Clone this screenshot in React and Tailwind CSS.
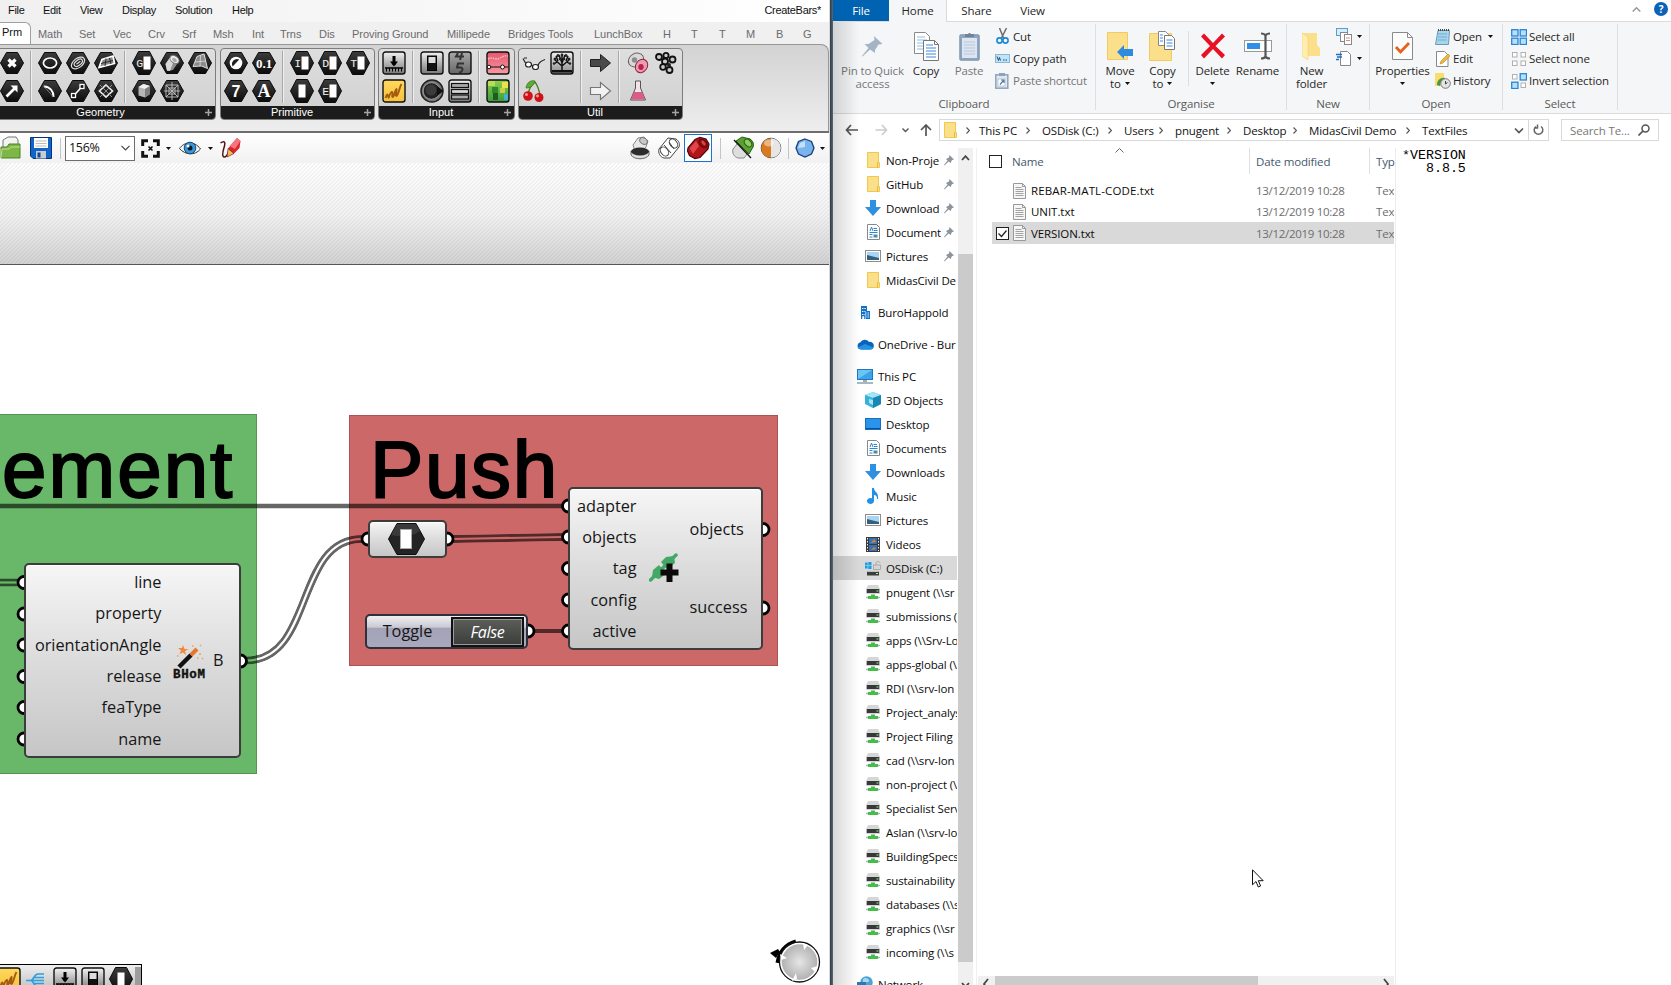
import React from 'react';

/* ---------- shared bits ---------- */

const Hex = ({ children, tall }) => (
  <svg width="24" height="24" viewBox="0 0 24 24" className="block">
    <defs>
      <linearGradient id="hexFill" x1="0" y1="0" x2="0" y2="1">
        <stop offset="0" stopColor="#3c3c3c" />
        <stop offset="1" stopColor="#0c0c0c" />
      </linearGradient>
    </defs>
    <path d={tall ? 'M6.5 .5h11L23.5 12l-6 11.5h-11L.5 12z' : 'M6.5 1.5h11L23.5 12l-6 10.5h-11L.5 12z'} fill="url(#hexFill)" stroke="#0a0a0a" />
    {children}
  </svg>
);

const HexText = ({ t, size = 15, x = 12, y = 17.5, serif, tall, block }) => (
  <Hex tall={tall}>
    <text x={block ? 7.8 : x} y={block ? 16 : y} textAnchor="middle" fontSize={block ? 11.5 : size} fontWeight={block ? 400 : 700} fill={block ? '#f0f0f0' : '#fff'} fontFamily={block ? 'Liberation Mono, monospace' : serif ? 'Liberation Serif, serif' : 'Liberation Sans, sans-serif'}>{t}</text>
    {block && <rect x="11.5" y="5.5" width="7" height="13" fill="#fff" />}
  </Hex>
);

const Framed = ({ children, from = '#f2f2f2', to = '#777' }) => {
  const id = `fr${from.slice(1)}${to.slice(1)}`;
  return (
    <svg width="24" height="24" viewBox="0 0 24 24" className="block">
      <defs>
        <linearGradient id={id} x1="0" y1="0" x2="0" y2="1">
          <stop offset="0" stopColor={from} />
          <stop offset="1" stopColor={to} />
        </linearGradient>
      </defs>
      <rect x="1" y="1" width="22" height="22" rx="2.5" fill={`url(#${id})`} stroke="#111" strokeWidth="1.4" />
      {children}
    </svg>
  );
};

const Caret = ({ className = '' }) => (
  <svg width="5" height="3" viewBox="0 0 5 3" className={`block shrink-0 ${className}`}><path d="M0 0h5L2.5 3z" fill="#111" /></svg>
);

/* ---------- component palette icons ---------- */

const I = {
  cross: <Hex><path d="M8.5 8.5l7 7M15.5 8.5l-7 7" stroke="#fff" strokeWidth="3.2" /></Hex>,
  vector: <Hex><path d="M6.5 17.5l8-8" stroke="#fff" strokeWidth="2.6" /><path d="M10.5 6.5h7v7z" fill="#fff" /></Hex>,
  circle: <Hex><ellipse cx="12" cy="12" rx="6.6" ry="5" fill="none" stroke="#fff" strokeWidth="1.7" /></Hex>,
  spiral: <Hex><g transform="rotate(-38 12 12)" fill="none" stroke="#ddd" strokeWidth="1.2"><ellipse cx="12" cy="12" rx="7.6" ry="4.6" /><ellipse cx="12.4" cy="12" rx="4.8" ry="2.6" /><path d="M10 12h5" /></g></Hex>,
  plane: <Hex><path d="M5 16.500l3-8 11-3.500 1.500 7.500z" fill="#888" stroke="#fff" strokeWidth="1.700" /><path d="M7 12.500l12-3M12 7.500l-1 7.500M15.500 7l1.500 6" stroke="#222" strokeWidth=".9" /></Hex>,
  arc: <Hex><path d="M6 7.500c6 .5 9.500 4.500 9.500 10.500" fill="none" stroke="#fff" strokeWidth="2" /><path d="M6 7.500l9.500 10.500M6 7.500v-1.500" stroke="#888" strokeWidth=".8" /></Hex>,
  line: <Hex><path d="M8 16.500l8-9" stroke="#fff" strokeWidth="1.600" /><rect x="5.500" y="14.500" width="4" height="4" fill="#111" stroke="#fff" strokeWidth="1.300" /><rect x="14" y="5.500" width="4" height="4" fill="#111" stroke="#fff" strokeWidth="1.300" /></Hex>,
  rect: <Hex><path d="M12 6l6.500 6L12 18l-6.500-6z" fill="#222" stroke="#e8e8e8" strokeWidth="1.700" /><path d="M6 6l12 12M18 6L6 18" stroke="#999" strokeWidth=".9" /></Hex>,
  brep: <Hex><path d="M5.500 13L11 5l8 5-6 9-6 1z" fill="#8e8e8e" /><path d="M5.500 13L11 5l2 7-3 8-3-.5z" fill="#d8d8d8" /><ellipse cx="14.500" cy="8.500" rx="5" ry="3.400" transform="rotate(35 14.500 8.500)" fill="#eee" stroke="#777" /><ellipse cx="14.500" cy="9" rx="2.700" ry="1.700" transform="rotate(35 14.500 9)" fill="#aaa" /></Hex>,
  surface: <Hex><path d="M9 5.500l7-2.500 3.500 14.500-6-2.500-8.500.5z" fill="#8c8c8c" stroke="#ddd" /><path d="M12.500 4.500l-.5 10.500M7 11l11-1" stroke="#ddd" strokeWidth=".8" /></Hex>,
  box: <Hex><path d="M6.500 8l5-3 6.500 2v8l-5 3.500-6.500-2z" fill="#b5b5b5" /><path d="M6.500 8l5-3 6.500 2-5 3z" fill="#f2f2f2" /><path d="M13 10l5-3v8l-5 3.500z" fill="#7e7e7e" /></Hex>,
  mesh: <Hex><g fill="none" stroke="#c4c4c4" strokeWidth=".9"><path d="M6 6h12v12H6zM9 9h6v6H9z" /><path d="M4 12h16M12 3v18M6 6l12 12M18 6L6 18" /></g></Hex>,
  bool: <Hex><circle cx="12" cy="12" r="6.300" fill="#fff" /><path d="M7.800 14.500a5 5 0 006.500-7z" transform="rotate(180 11.500 11.500)" fill="#222" /></Hex>,
  num: <HexText t="0.1" size={13} y={16.500} serif />,
  int: <HexText t="7" size={16} />,
  str: <HexText t="A" size={18} y={18} serif />,
  blockI: <HexText t="I" block tall />,
  blockD: <HexText t="D" block tall />,
  blockT: <HexText t="T" block tall />,
  blockE: <HexText t="E" block tall />,
  blockG: <HexText t="G" block tall />,
  blank: <Hex tall><rect x="8.500" y="5.500" width="7" height="13" fill="#fff" /></Hex>,
  slider: <Framed><path d="M12 5v9" stroke="#000" strokeWidth="3" /><path d="M8 10.500h8L12 15.500z" fill="#000" /><path d="M3 17h18" stroke="#000" strokeWidth="1.500" /><path d="M4.500 17v3.500M7.500 17v3.500M10.500 17v3.500M13.500 17v3.500M16.500 17v3.500M19.500 17v3.500" stroke="#000" /></Framed>,
  graph: <Framed from="#ffd95e" to="#f5c23c"><path d="M3.500 19c1-3 3-4 3-1s1-4 3-5 0 5 1 5c2 0 2-7 4-8 1 1-2 7 0 7 2-1 3-9 5-12M4 17l2-2" fill="none" stroke="#a65a10" strokeWidth="1.900" /></Framed>,
  toggle: <Framed><rect x="7.500" y="5" width="9" height="14.500" fill="#111" stroke="#000" /><rect x="8.500" y="6" width="7" height="6" fill="#ddd" /></Framed>,
  digits: <Framed from="#a8a8a8" to="#666"><path d="M10 2L8 5.500h8M14 2l-2 7M16 12.500h-6l-1 4h4c3 1 1 5-2 5" fill="none" stroke="#333" strokeWidth="2" /></Framed>,
  knob: <svg width="24" height="24" viewBox="0 0 24 24" className="block"><circle cx="12" cy="12" r="11" fill="#777" stroke="#222" strokeWidth="1.500" /><circle cx="11.500" cy="12" r="8.300" fill="#222" stroke="#aaa" strokeWidth=".8" /><path d="M17 7l6.500 5-6.500 5z" fill="#111" /><circle cx="11" cy="11" r="5.500" fill="#3b3b3b" /></svg>,
  list: <Framed><g fill="#aaa" stroke="#111" strokeWidth="1.200"><rect x="3.500" y="4.500" width="17" height="4" /><rect x="3.500" y="10.500" width="17" height="4" fill="#d4d4d4" /><rect x="3.500" y="16" width="17" height="4" /></g></Framed>,
  pinkPanel: <Framed from="#e4566f" to="#f79aa0"><path d="M1.800 16h20.400" stroke="#111" strokeWidth="1.200" /><path d="M2 8c5-3 7 2 12-1s6-2 8-2" stroke="#fbb" fill="none" strokeDasharray="1.500 1" strokeWidth="1.500" /><circle cx="3" cy="16" r="1.800" fill="#fff" stroke="#111" /><circle cx="16.500" cy="16" r="2" fill="#fff" stroke="#111" /></Framed>,
  heat: <Framed from="#8fcf4a" to="#3a9a3a"><rect x="2" y="2" width="7" height="5" fill="#b9dc5a" /><rect x="16" y="3" width="6" height="6" fill="#e6e250" /><rect x="6" y="8" width="6" height="6" fill="#2c8a2a" /><rect x="14" y="9" width="5" height="5" fill="#c0d24a" /><rect x="7" y="14" width="5" height="7" fill="#1d5a24" /><rect x="18" y="15" width="4" height="6" fill="#40b2d8" /></Framed>,
  glasses: <svg width="24" height="24" viewBox="0 0 24 24" className="block"><g fill="#fff" stroke="#222" strokeWidth="1.200"><ellipse cx="6.500" cy="13.500" rx="3" ry="2.500" /><ellipse cx="13.500" cy="16" rx="3" ry="2.500" /><path d="M3.500 12L1 7.500M9.300 14l1.400 1M16 14.500c1-3 4-5 7-6M2 7h3" fill="none" /></g></svg>,
  tree: <Framed from="#f0f0f0" to="#8a8a8a"><path d="M1.800 19h20.400v2.500H1.800z" fill="#111" /><path d="M12 20v-8M12 15L5 9M12 15l7-6M12 12L9 4M12 12l3-8M7 11l-3 2M17 11l3 2M8 10L6 5M16 10l2-5M12 11V4" stroke="#111" strokeWidth="1.500" fill="none" /><g fill="#222"><circle cx="5" cy="8" r="1.500" /><circle cx="8" cy="4.500" r="1.500" /><circle cx="12" cy="4" r="1.400" /><circle cx="16" cy="4.500" r="1.500" /><circle cx="19" cy="8" r="1.500" /><circle cx="4" cy="12.500" r="1.200" /><circle cx="20" cy="12.500" r="1.200" /><circle cx="10" cy="8" r="1.300" /><circle cx="14" cy="8" r="1.300" /></g></Framed>,
  cherry: <svg width="24" height="24" viewBox="0 0 24 24" className="block"><path d="M13 3C9 6 7 10 6 15M13 3c3 4 4 8 5 13" fill="none" stroke="#4c7c22" strokeWidth="1.300" /><path d="M13 2C9 1 5 3 4 9c5 0 8-3 9-7z" fill="#5cae34" stroke="#2d6b14" strokeWidth=".7" /><circle cx="6" cy="17" r="4.800" fill="#cf1018" /><circle cx="17" cy="18.500" r="4.500" fill="#cf1018" /><circle cx="4.500" cy="15.500" r="1.500" fill="#ff9a9a" /><circle cx="15.500" cy="17" r="1.400" fill="#ff9a9a" /></svg>,
  arrowDark: <svg width="24" height="24" viewBox="0 0 24 24" className="block"><path d="M2.500 8.500h10v-5L22.500 12l-10 8.500v-5h-10z" fill="#4a4a4a" stroke="#222" /></svg>,
  arrowLight: <svg width="24" height="24" viewBox="0 0 24 24" className="block"><path d="M2.500 8.500h10v-5L22.500 12l-10 8.500v-5h-10z" fill="#f2f2f2" stroke="#777" strokeWidth="1.200" /></svg>,
  cells: <svg width="24" height="24" viewBox="0 0 24 24" className="block"><ellipse cx="10" cy="9" rx="8" ry="6.500" transform="rotate(-30 10 9)" fill="#d9d9d9" stroke="#666" /><circle cx="8.500" cy="9" r="2.700" fill="#8c8c8c" /><ellipse cx="15.500" cy="15" rx="5.800" ry="7" transform="rotate(35 15.500 15)" fill="#ee9bb2" stroke="#8c2440" /><ellipse cx="15" cy="16" rx="2.700" ry="3" fill="#b8234a" /></svg>,
  frogs: <svg width="24" height="24" viewBox="0 0 24 24" className="block"><g fill="#c9c9c9" stroke="#111" strokeWidth="1.800"><circle cx="5" cy="6" r="3" /><circle cx="12" cy="4.500" r="2.600" /><circle cx="11" cy="10.500" r="3" /><circle cx="18.500" cy="8.500" r="3" /><circle cx="9" cy="16" r="2.800" /><circle cx="15.500" cy="19" r="3" /></g><circle cx="15" cy="14" r="2" fill="#222" /></svg>,
  flask: <svg width="24" height="24" viewBox="0 0 24 24" className="block"><path d="M9.500 2h5v7l5 12h-15l5-12z" fill="#f3e3e8" stroke="#555" /><path d="M8 13h8l3 7.500H5z" fill="#db5c85" /></svg>,
};

const PANELS = [
  { name: 'Geometry', width: 'w-[220px]', ml: '-ml-1', groups: [
    ['grid-cols-1', ['cross', 'vector']],
    ['grid-cols-3', ['circle', 'spiral', 'plane', 'arc', 'line', 'rect']],
    ['grid-cols-3', ['blockG', 'brep', 'surface', 'box', 'mesh']],
  ] },
  { name: 'Primitive', width: 'w-[155px]', ml: 'ml-1', groups: [
    ['grid-cols-2', ['bool', 'num', 'int', 'str']],
    ['grid-cols-3', ['blockI', 'blockD', 'blockT', 'blank', 'blockE']],
  ] },
  { name: 'Input', width: 'w-[137px]', ml: 'ml-[3px]', groups: [
    ['grid-cols-1', ['slider', 'graph']],
    ['grid-cols-2', ['toggle', 'digits', 'knob', 'list']],
    ['grid-cols-1', ['pinkPanel', 'heat']],
  ] },
  { name: 'Util', width: 'w-[165px]', ml: 'ml-[3px]', groups: [
    ['grid-cols-2', ['glasses', 'tree', 'cherry']],
    ['grid-cols-1', ['arrowDark', 'arrowLight']],
    ['grid-cols-2', ['cells', 'frogs', 'flask']],
  ] },
];

const Panel = ({ p }) => (
  <div className={`flex h-[72px] shrink-0 flex-col overflow-hidden rounded border border-[#7d7d7d] bg-gradient-to-b from-[#dedede] to-[#d0d0d0] ${p.width} ${p.ml}`}>
    <div className="flex h-[57px] pl-px">
      {p.groups.map(([cols, icons], i) => (
        <React.Fragment key={i}>
          {i > 0 && <div className="mx-[4px] mt-0.5 h-[52px] w-[2px] shrink-0 border-l border-[#a8a8a8] bg-[#efefef]" />}
          <div className={`grid shrink-0 auto-rows-[28px] ${cols}`}>
            {icons.map((n) => <div key={n} className="flex h-7 w-7 items-center justify-center">{I[n]}</div>)}
          </div>
        </React.Fragment>
      ))}
    </div>
    <div className="relative flex flex-1 items-center justify-center bg-[#1c1c1c] pr-[11px] text-[11px] leading-none text-white">
      {p.name}
      <svg width="7" height="7" viewBox="0 0 7 7" className="absolute right-[3px] top-[3px]"><path d="M3.500 0v7M0 3.500h7" stroke="#a4a4a4" strokeWidth="1.500" /></svg>
    </div>
  </div>
);

/* ---------- canvas toolbar ---------- */

const Sep = ({ className }) => <div className={`h-[21px] w-px bg-[#c4c4c4] ${className}`} />;

const CanvasToolbar = () => (
  <div className="flex h-[30px] shrink-0 items-center bg-gradient-to-b from-white to-[#f1f1f1]">
    <svg width="21" height="24" viewBox="0 0 21 24" className="shrink-0"><path d="M3 4l5-3h8l2 3v8H3z" fill="#f3f3f3" stroke="#777" /><path d="M1 11h6l2-3h11v14H1z" fill="#7fb648" stroke="#4b8424" /><path d="M1 22l1-9h7l2-2h9" fill="none" stroke="#bfe08c" /></svg>
    <svg width="22" height="22" viewBox="0 0 22 22" className="ml-[9px] shrink-0"><path d="M.5 .5h21v21H3l-2.500-2.500z" fill="#1264c8" stroke="#08356f" /><rect x="4" y="1" width="14" height="10" fill="#fff" /><path d="M5.500 4h11M5.500 6.500h11M5.500 9h11" stroke="#bbb" /><rect x="6" y="14" width="10" height="7.500" fill="#ccc" /><rect x="7.500" y="15.500" width="3" height="5" fill="#0a4ca0" /></svg>
    <Sep className="ml-2 shrink-0" />
    <div className="ml-1 flex h-[25px] w-[70px] shrink-0 items-center justify-between border border-[#6d6d6d] bg-white pl-[3px] pr-[4px] font-['Open_Sans',sans-serif] text-[12.500px] tracking-[-0.300px] text-[#111]">
      156%
      <svg width="9" height="6" viewBox="0 0 9 6"><path d="M.5 .8l4 4 4-4" fill="none" stroke="#444" strokeWidth="1.200" /></svg>
    </div>
    <svg width="19" height="19" viewBox="0 0 19 19" className="ml-[6px] shrink-0"><path d="M1.700 7V1.700H7M12 1.700h5.300V7M17.300 12v5.300H12M7 17.300H1.700V12" fill="none" stroke="#111" strokeWidth="3" /><path d="M7.500 7.500l4 4M11.500 7.500l-4 4" stroke="#111" strokeWidth="1.600" /></svg>
    <Caret className="ml-[6px]" />
    <svg width="22" height="16" viewBox="0 0 22 16" className="ml-[8px] shrink-0"><path d="M.5 8.500C5 2 15 0 21.500 9 16 16 6 15 .5 8.500z" fill="#f2f7fa" stroke="#333" /><circle cx="11" cy="8" r="5.800" fill="#3d95d6" stroke="#134c7c" /><circle cx="11" cy="8" r="2.500" fill="#0a1c30" /><circle cx="9" cy="6" r="1.500" fill="#fff" /></svg>
    <Caret className="ml-[7px]" />
    <svg width="22" height="22" viewBox="0 0 22 22" className="ml-[6px] shrink-0"><path d="M1.500 6c4-3 5-.5 4 3S2 19 5 20c3 .5 4-4 5-6" fill="none" stroke="#4a1414" strokeWidth="1.500" /><path d="M9 11.500L18 1l3.500 3-1 7-5.500 5.500-5 1.500z" fill="#d92530" /><path d="M18 1l3.500 3-5.500 8-5.500-3z" fill="#f4757c" /><path d="M9 11.500l6 5L8 20z" fill="#e9c04a" stroke="#603" strokeWidth=".6" /></svg>
    <div className="flex-1" />
    <div className="flex shrink-0 items-center pr-[4px]">
      <svg width="20" height="24" viewBox="0 0 20 24"><path d="M3 9l5-7 6-1 4 4-2 6-4 4H5z" fill="#e8e8e8" stroke="#888" /><ellipse cx="13.500" cy="5" rx="4" ry="3" transform="rotate(30 13.500 5)" fill="#c8c8c8" stroke="#777" /><path d="M1 15c4 3 14 3 18 0v4c-3 5-15 5-18 0z" fill="#ddd" stroke="#666" /><ellipse cx="10" cy="15.500" rx="9" ry="4" fill="#2c2c2c" /></svg>
      <svg width="22" height="22" viewBox="0 0 22 22" className="ml-[8px]"><g fill="#fff" stroke="#444"><path d="M1 12L10 1l8 1c3 2 4 5 3 8l-9 11H6c-4-1-6-5-5-9z" /><ellipse cx="15.500" cy="6.500" rx="3.500" ry="5" transform="rotate(-40 15.500 6.500)" /><ellipse cx="6.500" cy="14.500" rx="3.500" ry="5" transform="rotate(-40 6.500 14.500)" /><path d="M6 8l7 8M11 5l5 7" fill="none" /></g></svg>
      <div className="ml-[4px] flex h-7 w-7 shrink-0 items-center justify-center border border-[#1a74d0] bg-[#fbfdff]">
        <svg width="24" height="24" viewBox="0 0 24 24" className="block shrink-0"><path d="M2 12L9 3.500 14 1.500l6 1.500 3 5-1 5-8 8.500-5 1-5.500-3L1.500 15z" fill="#b3151b" stroke="#4d0507" strokeWidth="1.200" /><path d="M3.500 12L10 5l3 5-6 8z" fill="#e0454a" /><ellipse cx="17" cy="7.500" rx="3.300" ry="5" transform="rotate(-42 17 7.500)" fill="#8e0b10" stroke="#5c0508" /><ellipse cx="17.500" cy="7" rx="1.500" ry="2.800" transform="rotate(-42 17.500 7)" fill="#d0494d" /></svg>
      </div>
      <Sep className="ml-[8px]" />
      <svg width="24" height="24" viewBox="0 0 24 24" className="ml-[10px]"><path d="M2 13l9-11 8 1c3 2 4 5 3 8l-9 11H7c-4-1-6-5-5-9z" fill="#dedede" stroke="#888" /><path d="M5 5l6-4 8 2c3 2 4 5 3 8l-4 7z" fill="#5b9f35" stroke="#2c6210" /><ellipse cx="17" cy="7" rx="3" ry="4.500" transform="rotate(-40 17 7)" fill="#8ccb5f" stroke="#2c6210" /><path d="M3 4l17 18" stroke="#111" strokeWidth="1.300" /></svg>
      <svg width="22" height="22" viewBox="0 0 22 22" className="ml-[5px]"><circle cx="11" cy="11" r="9.800" fill="#e9e9e9" stroke="#444" /><path d="M11 1.200a9.800 9.800 0 000 19.600z" fill="#d97a1e" /><path d="M11 1.200a9.800 9.800 0 010 19.600z" fill="#e6e6e6" /><path d="M11 1.200a9.800 9.800 0 010 19.600z" fill="none" /><ellipse cx="9" cy="6" rx="5" ry="3.500" fill="#fff" opacity=".45" /></svg>
      <Sep className="ml-[6px]" />
      <svg width="20" height="20" viewBox="0 0 20 20" className="ml-[6px]"><path d="M10 1l6.500 2.500L19 10l-2.500 6L10 19l-6.500-3L1 10l2.500-6.500z" fill="#79b4ee" stroke="#163f78" strokeWidth="1.300" /><path d="M10 3l-5 2-2 5 7-1z" fill="#c4e0fb" /></svg>
      <Caret className="ml-[5px]" />
    </div>
  </div>
);

/* ---------- node canvas ---------- */

const Port = ({ x, y }) => <circle cx={x} cy={y} r="6" fill="#fff" stroke="#000" strokeWidth="2.800" />;

const DoubleWire = ({ id, d }) => (
  <g>
    <mask id={id} maskUnits="userSpaceOnUse" x="0" y="0" width="831" height="822">
      <path d={d} fill="none" stroke="#fff" strokeWidth="8" />
      <path d={d} fill="none" stroke="#000" strokeWidth="2.200" />
    </mask>
    <path d={d} fill="none" stroke="#000" strokeOpacity=".6" strokeWidth="8" mask={`url(#${id})`} />
  </g>
);

const nodeBox = 'absolute rounded-[5px] border-2 border-[#3c3c3c] bg-gradient-to-b from-[#f6f6f6] via-[#dcdcdc] to-[#c6c6c6] shadow-[inset_0_1px_0_#fff]';
const label = "font-['Open_Sans',sans-serif] text-[16.3px] text-[#161616]";
const heading = "absolute top-[261px] font-['Liberation_Sans',Arial,sans-serif] text-[80px] leading-[92px] text-black [-webkit-text-stroke:2px_#000]";

const Canvas = () => (
  <div className="relative flex-1 overflow-hidden bg-white">
    <div className="h-[102px] border-b border-[#555] bg-[linear-gradient(to_bottom,rgba(255,255,255,0.6),rgba(235,235,235,0.55)_50%,rgba(195,195,195,0.75)),repeating-linear-gradient(135deg,#fff_0_1.41px,#e2e2e2_1.41px_2.83px)]" />
    <div className="absolute -left-1 top-[251px] h-[360px] w-[261px] border border-[#559455] bg-[#69b869]" />
    <div className="absolute left-[349px] top-[252px] h-[251px] w-[429px] border border-[#a85454] bg-[#cc6868]" />
    <div className={`${heading} left-[2px] tracking-[2px]`}>ement</div>
    <div className={`${heading} left-[370px] tracking-[1.6px]`}>Push</div>

    <svg className="absolute left-0 top-0" width="831" height="822" viewBox="0 0 831 822">
      <path d="M0 343H562" stroke="#000" strokeOpacity=".6" strokeWidth="4.600" />
      <DoubleWire id="w1" d="M0 419.500H20" />
      <DoubleWire id="w2" d="M246 497.500C315 497.500 294 376 362 376" />
      <DoubleWire id="w3" d="M453 376L562 374" />
      <path d="M533 468H562" stroke="#000" strokeOpacity=".6" strokeWidth="4" />
      {[419.500, 451, 482, 513.500, 544.500, 576].map((y) => <Port key={y} x={24} y={y} />)}
      <Port x={240.500} y={498} />
      <Port x={368} y={376} /><Port x={447} y={376} />
      {[343, 374, 405.500, 437, 468].map((y) => <Port key={y} x={568.500} y={y} />)}
      <Port x={763} y={366.500} /><Port x={763} y={445} />
      <Port x={528} y={468} />
    </svg>

    <div className={`${nodeBox} left-[24px] top-[400px] flex h-[195px] w-[217px] items-center`}>
      <div className={`flex w-[135.500px] flex-col pt-px text-right ${label}`}>
        {['line', 'property', 'orientationAngle', 'release', 'feaType', 'name'].map((t) => <div key={t} className="h-[31.300px] leading-[31px]">{t}</div>)}
      </div>
      <svg width="34" height="36" viewBox="0 0 34 36" className="ml-[11px] mt-[2px] shrink-0">
        <path d="M6 23L18 11" stroke="#111" strokeWidth="4.500" /><path d="M18 11l6-6" stroke="#e8762a" strokeWidth="4" />
        <path d="M10 1l1.500 4 4 0-3.500 2 1 4-3-2.500L6.500 10 8 6.500 5 4h4z" fill="#f0883a" />
        <path d="M26 10h2M24 14h1.500M19 2h1.500M29 14l1 1M27 2l1-1M4 12h1.500" stroke="#f0a060" strokeWidth="1.600" />
        <text x="0" y="34" fontFamily="Liberation Mono, monospace" fontSize="12.500" fontWeight="700" textLength="32" lengthAdjust="spacing" fill="#111" stroke="#111" strokeWidth=".4">BHoM</text>
      </svg>
      <div className={`ml-[6.500px] ${label}`}>B</div>
    </div>

    <div className={`${nodeBox} left-[568px] top-[324px] flex h-[163px] w-[195px] items-center`}>
      <div className={`flex w-[66.500px] flex-col pt-px text-right ${label}`}>
        {['adapter', 'objects', 'tag', 'config', 'active'].map((t) => <div key={t} className="h-[31.300px] leading-[31px]">{t}</div>)}
      </div>
      <svg width="30" height="30" viewBox="0 0 30 30" className="-mt-[2px] ml-[12px]">
        <path d="M1.500 27L27 2" stroke="#43a866" strokeWidth="3.500" strokeLinecap="round" /><path d="M12 9l5-5 8-1 1 7-8 6z" fill="#43a866" /><path d="M3 24l1-7 6-5 7 9-7 5z" fill="#43a866" />
        <path d="M20.500 10.500V29M11.500 19.500H29.500" stroke="#0a0a0a" strokeWidth="6" />
      </svg>
      <div className={`ml-[11px] flex flex-col gap-[47px] ${label}`}>
        {['objects', 'success'].map((t) => <div key={t} className="h-[31px] leading-[31px]">{t}</div>)}
      </div>
    </div>

    <div className={`${nodeBox} left-[368px] top-[357px] flex h-[38px] w-[79px] items-center justify-center pr-[2px]`}>
      <svg width="37" height="32" viewBox="0 0 37 32"><path d="M9 .5h19L36.500 16 28 31.500H9L.5 16z" fill="#242424" stroke="#0d0d0d" /><path d="M9 1h19l4 7C24 14 12 14 3 12z" fill="#4a4a4a" opacity=".6" /><rect x="12.500" y="6.500" width="11" height="19" fill="#fff" stroke="#aaa" /></svg>
    </div>

    <div className="absolute left-[365px] top-[451px] flex h-[35px] w-[163px] items-center rounded-[5px] border-2 border-[#30303a] bg-[linear-gradient(to_bottom,#f0f0f3,#c9c9d3_36%,#a3a3b8_40%,#a9a9bd)] pr-[2px]">
      <div className={`flex-1 pr-[3px] text-center ${label}`}>Toggle</div>
      <div className="flex h-[30px] w-[73px] items-center justify-center border-2 border-[#111] bg-gradient-to-b from-[#5c5e5a] to-[#3b3d3a] font-['Open_Sans',sans-serif] text-[16px] italic tracking-[-0.300px] text-white shadow-[inset_0_0_0_1px_#9a9a9a]">False</div>
    </div>

    <div className="absolute left-0 top-[801px] flex h-[24px] w-[142px] items-start border-r border-t border-black bg-gradient-to-b from-[#efefef] to-[#c4c4c4] pt-[2px]">
      <div className="-ml-[3px]">{I.graph}</div>
      <svg width="20" height="20" viewBox="0 0 20 20" className="ml-[5px] mt-1"><path d="M0 9.500h18M5 9.500C8 9 8 3 12 3h6M5 9.500c3 .5 3 6.500 7 6.500h6M8 6.500h10M8 12.500h10" fill="none" stroke="#2c9fe0" strokeWidth="1.700" /></svg>
      <div className="ml-[7px]">{I.slider}</div>
      <div className="ml-[4px]">{I.toggle}</div>
      <div className="ml-[4px]">{I.blank}</div>
      <div className="ml-auto h-[24px] w-[6px] bg-[#9d9d9d]" />
    </div>

    <svg width="54" height="46" viewBox="0 0 54 46" className="absolute left-[768px] top-[776px]">
      <defs><radialGradient id="nav"><stop offset="0" stopColor="#e6e6e6" /><stop offset="1" stopColor="#b2b2b2" /></radialGradient></defs>
      <path d="M10 24C12 12 18 6 28 3" fill="none" stroke="#000" strokeWidth="5" />
      <path d="M2 14l8-4 2 3-4 6z" fill="#000" />
      <circle cx="31.500" cy="23" r="20" fill="#fff" stroke="#111" strokeWidth="1.300" />
      <circle cx="31.500" cy="23" r="17.800" fill="url(#nav)" />
      <path d="M35 4l5 2-4 5zM12 15l7 4-6 2zM50 27l-7 2 5 5zM24 42l5-2-1-6z" fill="#fff" />
    </svg>
  </div>
);

/* ---------- left application ---------- */

const MENUS = [['File', 'w-[35px]'], ['Edit', 'w-[37px]'], ['View', 'w-[42px]'], ['Display', 'w-[53px]'], ['Solution', 'w-[57px]'], ['Help', 'w-[40px]']];
const TABS = [
  ['Math', 'w-[41px]'], ['Set', 'w-[34px]'], ['Vec', 'w-[35px]'], ['Crv', 'w-[34px]'], ['Srf', 'w-[31px]'], ['Msh', 'w-[39px]'], ['Int', 'w-[28px]'],
  ['Trns', 'w-[39px]'], ['Dis', 'w-[33px]'], ['Proving Ground', 'w-[95px]'], ['Millipede', 'w-[61px]'], ['Bridges Tools', 'w-[86px]'], ['LunchBox', 'w-[69px]'],
  ['H', 'w-[28px]'], ['T', 'w-[28px]'], ['T', 'w-[27px]'], ['M', 'w-[30px]'], ['B', 'w-[27px]'], ['G', 'w-[12px]'],
];

const LeftApp = () => (
  <div className="flex h-[985px] w-[830px] shrink-0 flex-col overflow-hidden border-r border-[#d8d8d8] bg-[#f0f0f0] font-['Liberation_Sans',Arial,sans-serif] text-[11px]">
    <div className="flex h-[22px] items-center bg-gradient-to-r from-[#f0f0f0] to-white pb-[2px] pl-2 pr-[8px] tracking-[-0.3px] text-[#111]">
      {MENUS.map(([t, w]) => <div key={t} className={`shrink-0 ${w}`}>{t}</div>)}
      <div className="ml-auto">CreateBars*</div>
    </div>
    <div className="flex h-[22px] shrink-0">
      <div className="flex h-[23px] w-[31px] shrink-0 items-center rounded-tr-[6px] border-r border-t border-[#a0a0a0] bg-white pb-[3px] pl-[2px] text-[#111]">Prm</div>
      <div className="flex flex-1 items-center whitespace-nowrap pl-[7px] pt-[2px] tracking-[-0.050px] text-[#6b6b6b]">
        {TABS.map(([t, w], i) => <div key={i} className={`shrink-0 ${w}`}>{t}</div>)}
      </div>
    </div>
    <div className="h-[87px] shrink-0 rounded-tr-[8px] border-r border-t border-[#979797] bg-gradient-to-b from-[#d3d3d3] to-[#eeeeee]">
      <div className="flex pt-[3px]">{PANELS.map((p) => <Panel key={p.name} p={p} />)}</div>
    </div>
    <div className="h-0.5 shrink-0 bg-[#6e6e6e]" />
    <CanvasToolbar />
    <Canvas />
  </div>
);

/* ---------- explorer icons ---------- */

const Folder = ({ w = 13, h = 16 }) => (
  <svg width={w} height={h} viewBox="0 0 13 16" preserveAspectRatio="none" className="block"><path d="M.5 .5h11v10h1v5H.5z" fill="#fbe08c" stroke="#f0c84a" /><path d="M11.500 10.500h-1v5" fill="none" stroke="#e8b93a" /></svg>
);
const DocIcon = () => (
  <svg width="13" height="16" viewBox="0 0 13 16"><path d="M.5 .5h9l3 3v12H.5z" fill="#fff" stroke="#888" /><path d="M6.500 4.500H10M7 6.500h3.500M2.500 8.500h8M2.500 10.500h3M2.500 13h3" stroke="#2a86d0" /><path d="M3 7L4.500 3 6 7" fill="none" stroke="#2a86d0" /><path d="M6.500 12h4" stroke="#4d8a9a" strokeWidth="3" /></svg>
);
const TxtIcon = () => (
  <svg width="13" height="16" viewBox="0 0 13 16" className="block shrink-0"><path d="M.5 .5h9l3 3v12H.5z" fill="#f6f6f6" stroke="#999" /><path d="M9.500 .5v3h3" fill="none" stroke="#999" /><path d="M2.500 4.500h6M2.500 6.500h8M2.500 8.500h8M2.500 10.500h8M2.500 12.500h8" stroke="#a3a3a3" /></svg>
);
const DownIcon = () => <svg width="16" height="16" viewBox="0 0 16 16"><path d="M5 0h6v7h5l-8 9-8-9h5z" fill="#2f8fe0" /></svg>;
const PicIcon = () => (
  <svg width="16" height="12" viewBox="0 0 16 12"><rect x=".5" y=".5" width="15" height="11" fill="#fff" stroke="#8d8d8d" /><rect x="2" y="2" width="12" height="8" fill="#a9d4f4" /><path d="M2 5l4 1 8 2v2H2z" fill="#32617a" /></svg>
);
const MusicIcon = () => <svg width="12" height="16" viewBox="0 0 12 16"><path d="M5 0h2c0 4 5 4 4 11h-1c0-3-1-4-3-4v6a3.500 3 0 11-2-2.800z" fill="#2391e6" /></svg>;
const VideoIcon = () => <svg width="14" height="15" viewBox="0 0 14 15"><rect width="14" height="15" fill="#3a3a3a" /><path d="M1.500 1v13M12.500 1v13" stroke="#eee" strokeDasharray="1.500 1.500" /><rect x="3" y="1" width="8" height="6" fill="#3571b8" /><rect x="3" y="8" width="8" height="6" fill="#3571b8" /><path d="M5 6l3-4 2 3zM5 13l3-3 2 2z" fill="#d8862c" /></svg>;
const DesktopIcon = () => <svg width="16" height="12" viewBox="0 0 16 12"><rect x=".5" y=".5" width="15" height="11" fill="#2a94ea" stroke="#1670c0" /><path d="M1 10.500h14" stroke="#0b4f92" /></svg>;
const PCIcon = () => <svg width="16" height="15" viewBox="0 0 16 15"><rect x=".5" y=".5" width="15" height="10" fill="#3ba3ea" stroke="#1d78bf" /><path d="M1 10V1h14z" fill="#6cc4f5" /><path d="M6 11h4v2H6z" fill="#aaa" /><path d="M0 14h16" stroke="#8aa0b0" strokeWidth="1.500" /></svg>;
const CubeIcon = () => <svg width="16" height="16" viewBox="0 0 16 16"><path d="M0 3l8-3 8 3v9l-8 4-8-4z" fill="#34b2d8" /><path d="M0 3l8-3 8 3-8 3z" fill="#a5e4f5" /><path d="M8 6l8-3v9l-8 4z" fill="#1a86b4" /><path d="M4 7l4 1v5l-4-2z" fill="#fff" opacity=".6" /></svg>;
const BldgIcon = () => <svg width="9" height="13" viewBox="0 0 9 13"><path d="M0 0h6v13H0zM5 5h4v8H5z" fill="#1272c8" /><path d="M1 2.500h4M1 5.500h3M1 8.500h3" stroke="#fff" strokeDasharray="1 .6" /><path d="M1.500 10.500h1.500V13H1.500zM4.500 5v8" fill="#fff" stroke="#fff" strokeWidth=".5" /><path d="M5.500 7h3M5.500 9h3M5.500 11h3" stroke="#fff" strokeDasharray="1 .6" /></svg>;
const CloudIcon = () => <svg width="17" height="11" viewBox="0 0 17 11"><path d="M4 10.500a3.700 3.700 0 01-.5-7.300A5 5 0 0112 3a3.800 3.800 0 014.800 4c0 2-1.500 3.500-3.500 3.500z" fill="#0a63b8" /><path d="M4 10.500c-1.500 0-3-1-3.500-2L8 5l8.500 3.500c-.5 1.300-1.700 2-3.200 2z" fill="#2293e4" /></svg>;
const OSIcon = () => <svg width="16" height="15" viewBox="0 0 16 15"><path d="M0 1.500h2.700v2.700H0zM3.300 1h3.200v3.200H3.300zM0 4.800h2.700v2.700H0zM3.300 4.800h3.200V8H3.300z" fill="#1ba0e8" /><rect x="8.500" y="4" width="7" height="4.500" fill="#d5d5d5" stroke="#999" strokeWidth=".7" /><path d="M11 4V2c0-2 4-2 4 0" fill="none" stroke="#aaa" /><path d="M2 10.500h12v4H2z" fill="#3c3c3c" /><path d="M3 9.500h10l1 1.200H2z" fill="#cfcfcf" /><path d="M11 12.500h2" stroke="#9f9" /></svg>;
const NetDrive = () => <svg width="14" height="14" viewBox="0 0 14 14"><path d="M2 0h10l2 4v5H0V4z" fill="#d6d6d6" /><path d="M.8 4h12.400v4H.8z" fill="#383838" /><path d="M10.500 6h2" stroke="#8f8" /><path d="M5 9.500h4v1.500h3v3H2v-3h3z" fill="#44bd4b" /><path d="M0 12.500h2M12 12.500h2" stroke="#b5b5b5" strokeWidth="1.500" /></svg>;
const NetIcon = () => <svg width="16" height="16" viewBox="0 0 16 16"><circle cx="9.500" cy="6.500" r="6.200" fill="#4ba3d8" /><path d="M6 3c2-2 5-1 6 1s-3 3-6 2z" fill="#a7d8ef" /><rect x="0" y="6" width="9" height="7" fill="#2a78b4" /></svg>;
const Pin = () => <svg width="10" height="11" viewBox="0 0 10 11" className="block"><path d="M5.500 0L10 4.500 8 5 6.500 8l-2-1.500L.5 10.500 0 10l3.500-4.500L2 4l3-1.500z" fill="#8b939b" /></svg>;

/* ---------- explorer ribbon ---------- */

const BigBtn = ({ w, icon, lines, dim, caret }) => (
  <div className={`flex shrink-0 flex-col items-center ${w}`}>
    <div className="flex h-[40px] items-center justify-center pt-[4px]">{icon}</div>
    <div className={`text-center leading-[13px] ${dim ? 'text-[#777]' : 'text-[#262626]'}`}>
      {lines.map((l, i) => (
        <div key={l} className="flex items-center justify-center gap-1">{l}{caret && i === lines.length - 1 && lines.length > 1 && <Caret />}</div>
      ))}
      {caret && lines.length === 1 && <div className="flex h-[13px] items-center justify-center"><Caret /></div>}
    </div>
  </div>
);

const Small = ({ icon, t, dim, caret }) => (
  <div className={`flex h-[22px] items-center ${dim ? 'tracking-[-0.250px] text-[#777]' : 'text-[#262626]'}`}>
    <div className="flex w-[18px] shrink-0 items-center">{icon}</div>{t}{caret && <Caret className="ml-[6px]" />}
  </div>
);

const Group = ({ w, title, children }) => (
  <div className={`flex h-[86px] shrink-0 flex-col border-r border-[#dcdfe1] ${w}`}>
    <div className="flex h-[72px] shrink-0 items-start">{children}</div>
    <div className="text-center leading-[15px] text-[#5a5a5a]">{title}</div>
  </div>
);

const grid4 = (fills) => (
  <svg width="16" height="16" viewBox="0 0 16 16">
    {[[0, 0], [8.5, 0], [0, 8.5], [8.5, 8.5]].map(([x, y], i) => fills[i]
      ? <rect key={i} x={x + 0.7} y={y + 0.7} width="6.300" height="6.300" fill="#b9e0f8" stroke="#2586d8" strokeWidth="1.300" />
      : <rect key={i} x={x + 1.5} y={y + 1.5} width="4.500" height="4.500" fill="#fff" stroke="#b0b0b0" />)}
  </svg>
);

const Ribbon = () => (
  <div className="flex h-[92px] shrink-0 border-b border-[#dadbdc] bg-[#f5f6f7] pt-[2px]">
    <Group w="w-[263px]" title="Clipboard">
      <BigBtn w="w-[76px] pl-[3px]" dim lines={['Pin to Quick', 'access']} icon={<svg width="21" height="22" viewBox="0 0 21 22"><path d="M12 1l8.500 8-4 .5-3.500 5.500v3L8 14.500l-7.500 7-.5-.5 6.500-8L2.500 9h4l6-4z" fill="#a3b4c4" /></svg>} />
      <BigBtn w="w-[34px]" lines={['Copy']} icon={<svg width="25" height="29" viewBox="0 0 25 29"><path d="M.5 .5h11l4 4v17H.5z" fill="#fff" stroke="#8a8a8a" /><path d="M3 5h8M3 8h10M3 11h10M3 14h10M3 17h10" stroke="#8dbbe8" /><path d="M9.500 8.500h11l4 4v16h-15z" fill="#fff" stroke="#777" /><path d="M20.500 8.500v4h4" fill="none" stroke="#777" /><path d="M12 13h7M12 16h10M12 19h10M12 22h10M12 25h10" stroke="#3b8ae0" /></svg>} />
      <BigBtn w="w-[52px]" dim lines={['Paste']} icon={<svg width="21" height="29" viewBox="0 0 21 29"><rect x=".8" y="2.800" width="19.400" height="25.400" rx="1" fill="#8fa5bf" stroke="#7d94b0" /><rect x="3" y="6" width="15" height="20" fill="#dde6f0" /><path d="M5 10h11M5 13h11M5 16h11M5 19h11M5 22h11" stroke="#b4c6da" /><path d="M6 5V2h3a1.700 1.700 0 013 0h3v3z" fill="#6f839b" /></svg>} />
      <div className="flex flex-col pt-[1.500px]">
        <Small t="Cut" icon={<svg width="15" height="17" viewBox="0 0 15 17"><path d="M4.500 0l4 10M11.500 0l-5 10" stroke="#6a6a6a" strokeWidth="1.500" /><circle cx="4.500" cy="12.500" r="2.600" fill="none" stroke="#1a88d4" strokeWidth="1.600" /><circle cx="10.500" cy="12.500" r="2.600" fill="none" stroke="#1a88d4" strokeWidth="1.600" /></svg>} />
        <Small t="Copy path" icon={<svg width="15" height="9" viewBox="0 0 15 9"><rect x=".5" y=".5" width="14" height="8" fill="#bfe3f7" stroke="#8ab8d4" /><path d="M2 2.500l1.500 4 1-3 1 3M8 6h1.500M10.500 6H12" fill="none" stroke="#1b4c77" /></svg>} />
        <Small t="Paste shortcut" dim icon={<svg width="14" height="16" viewBox="0 0 14 16"><rect x=".8" y="1.800" width="12" height="13.400" fill="#dfe8f1" stroke="#8ea3ba" strokeWidth="1.500" /><path d="M4 0h6v3H4z" fill="#8ea3ba" /><rect x="3" y="6" width="7" height="7" fill="#fff" stroke="#9ab" strokeWidth=".6" /><path d="M5 11.500l3.500-4M6 7h3v3" fill="none" stroke="#5478a8" strokeWidth="1.200" /></svg>} />
      </div>
    </Group>
    <Group w="w-[191px]" title="Organise">
      <BigBtn w="w-[48px]" caret lines={['Move', 'to']} icon={<svg width="27" height="28" viewBox="0 0 27 28"><path d="M.5 .5h20v27H.5z" fill="#fbdf8a" stroke="#f0cc60" /><path d="M10 20l7-7v4h9v7h-9v3z" fill="#2e8be0" /></svg>} />
      <BigBtn w="w-[37px]" caret lines={['Copy', 'to']} icon={<svg width="27" height="30" viewBox="0 0 27 30"><path d="M.5 2.500h22v27H.5z" fill="#fbdf8a" stroke="#f0cc60" /><path d="M9.500 .5h7l3 3v11h-10z" fill="#fff" stroke="#888" /><path d="M15.500 4.500h7l3 3v11h-10z" fill="#fff" stroke="#777" /><path d="M17.500 9h6M17.500 12h6M17.500 15h6M11 4h3M11 7h3M11 10h3" stroke="#3b8ae0" /></svg>} />
      <div className="ml-[7px] mt-[7px] h-[55px] w-px shrink-0 bg-[#dcdfe1]" />
      <BigBtn w="w-[47px]" caret lines={['Delete']} icon={<svg width="26" height="26" viewBox="0 0 26 26"><path d="M1 3.500L4 .5 13 10 22 .5l3 3L15.500 13l9.500 9-3 3.500L13 16l-9 9.500L1 22l9-9z" fill="#e81123" /></svg>} />
      <BigBtn w="w-[43px]" lines={['Rename']} icon={<svg width="28" height="28" viewBox="0 0 28 28"><rect x=".5" y="8.500" width="27" height="11" fill="#fff" stroke="#999" /><rect x="3" y="11" width="13" height="6" fill="#2f8fe6" /><path d="M17 1.500c3 0 4 1 4.500 2 .5-1 1.500-2 4.500-2M17 26.500c3 0 4-1 4.500-2 .5 1 1.500 2 4.500 2M21.500 3v22" fill="none" stroke="#555" strokeWidth="2.200" /></svg>} />
    </Group>
    <Group w="w-[83px]" title="New">
      <BigBtn w="w-[49px]" lines={['New', 'folder']} icon={<svg width="19" height="28" viewBox="0 0 19 28"><path d="M0 1h15v12l3 3v8H0z" fill="#fbdf8a" /><path d="M0 1l6 4v23l-6-4z" fill="#ffeeb0" stroke="#f3d274" strokeWidth=".6" /></svg>} />
      <div className="flex flex-col pt-[1.500px]">
        <div className="flex h-[22px] items-center gap-[4px]"><svg width="17" height="17" viewBox="0 0 17 17"><rect x=".5" y=".5" width="11" height="7" fill="#d5ecfa" stroke="#5b9fc8" /><rect x="4.500" y="4.500" width="7" height="9" fill="#fff" stroke="#888" /><rect x="8.500" y="6.500" width="7" height="10" fill="#fff" stroke="#888" /><path d="M10 10h4M10 12.500h4" stroke="#d88" /></svg><Caret /></div>
        <div className="flex h-[22px] items-center gap-[4px]"><svg width="17" height="17" viewBox="0 0 17 17"><path d="M4.500 1.500h7l3 3v11h-10z" fill="#fff" stroke="#888" /><path d="M0 4.500h6M1 7h5M0 9.500h3" stroke="#1d6fc0" strokeWidth="1.300" /></svg><Caret /></div>
      </div>
    </Group>
    <Group w="w-[133px]" title="Open">
      <BigBtn w="w-[65px]" caret lines={['Properties']} icon={<svg width="21" height="28" viewBox="0 0 21 28"><path d="M.5 .5h15l5 5v22H.5z" fill="#fdfdfd" stroke="#8a8a8a" /><path d="M15.500 .5v5h5" fill="none" stroke="#8a8a8a" /><path d="M4 15l4.500 5L17 11" fill="none" stroke="#e8601c" strokeWidth="2.800" /></svg>} />
      <div className="flex flex-col pt-[1.500px]">
        <Small t="Open" caret icon={<svg width="15" height="16" viewBox="0 0 15 16"><path d="M3 1.500h11.500l-1 14H.5z" fill="#a8d5ee" stroke="#6a9ab4" /><path d="M3 1h11" stroke="#444" strokeWidth="2" strokeDasharray="1 1" /><path d="M3 5h9M3 8h9M2.500 11h9" stroke="#6fabcf" /></svg>} />
        <Small t="Edit" icon={<svg width="15" height="16" viewBox="0 0 15 16"><path d="M1.500 .5h8l3.500 3.500v11.500H1.500z" fill="#fff" stroke="#888" /><path d="M5 13l1-3 7-7 2 2-7 7z" fill="#f2b63c" stroke="#b8832a" strokeWidth=".6" /></svg>} />
        <Small t="History" icon={<svg width="16" height="16" viewBox="0 0 16 16"><path d="M0 0h9v13H0z" fill="#fbdc6c" /><path d="M2 12c0-5 4-8 8-7l-1 3c-3 0-4 2-4 5z" fill="#3f9a44" /><circle cx="10.500" cy="10.500" r="4.800" fill="#e4e4e4" stroke="#777" /><path d="M10.500 8v3l2-1.500" fill="none" stroke="#444" /></svg>} />
      </div>
    </Group>
    <Group w="w-[115px]" title="Select">
      <div className="flex flex-col pl-[8px] pt-[1.500px]">
        <Small t="Select all" icon={grid4([1, 1, 1, 1])} />
        <Small t="Select none" icon={grid4([0, 0, 0, 0])} />
        <Small t="Invert selection" icon={grid4([0, 1, 1, 0])} />
      </div>
    </Group>
  </div>
);

const Chev = () => <svg width="4" height="7" viewBox="0 0 4 7" className="shrink-0"><path d="M.5 .5l3 3-3 3" fill="none" stroke="#555" strokeWidth="1.200" /></svg>;

const CRUMBS = [['This PC', 'w-[54px]'], ['OSDisk (C:)', 'w-[73px]'], ['Users', 'w-[42px]'], ['pnugent', 'w-[59px]'], ['Desktop', 'w-[57px]'], ['MidasCivil Demo', 'w-[104px]']];

const AddressBar = () => (
  <div className="flex h-[34px] shrink-0 items-center pb-[2px] pl-[12px] text-[#111]">
    <svg width="98" height="12" viewBox="0 0 98 12" className="shrink-0"><g fill="none" stroke="#555" strokeWidth="1.700"><path d="M6 1L1.500 6 6 11M1.500 6H13" /><path d="M37 1l4.500 5-4.500 5M41.500 6H30.500" stroke="#ccc" /><path d="M57.500 4.500l3 3 3-3" strokeWidth="1.400" /><path d="M76 6l5-5 5 5M81 1v11" /></g></svg>
    <div className="-ml-[4px] flex h-[22px] w-[610px] shrink-0 items-center whitespace-nowrap border border-[#d9d9d9] bg-white pl-[4px]">
      <Folder />
      <div className="ml-[9px]"><Chev /></div>
      {CRUMBS.map(([t, w]) => <div key={t} className={`ml-[9px] flex shrink-0 items-center pr-[3px] ${w}`}><span className="flex-1">{t}</span><Chev /></div>)}
      <div className="ml-[9px]">TextFiles</div>
      <svg width="10" height="7" viewBox="0 0 10 7" className="ml-auto"><path d="M1 1.500l4 4 4-4" fill="none" stroke="#555" strokeWidth="1.700" /></svg>
      <div className="ml-[4px] flex h-[20px] w-[20px] items-center justify-center border-l border-[#d9d9d9]">
        <svg width="11" height="12" viewBox="0 0 11 12"><path d="M8 2.500A4.300 4.300 0 11 3 2.500M4.500 .5v3.500H1" fill="none" stroke="#666" strokeWidth="1.500" /></svg>
      </div>
    </div>
    <div className="ml-[12px] flex h-[22px] w-[98px] items-center justify-between border border-[#d9d9d9] bg-white pl-[8px] pr-[8px] text-[#777]">
      Search Te...
      <svg width="12" height="12" viewBox="0 0 12 12"><circle cx="7.500" cy="4.500" r="3.500" fill="none" stroke="#555" strokeWidth="1.500" /><path d="M5 7l-4.500 4.500" stroke="#555" strokeWidth="1.700" /></svg>
    </div>
  </div>
);

/* ---------- explorer tree and list ---------- */

const drives = ['pnugent (\\\\sr', 'submissions (', 'apps (\\\\Srv-Lo', 'apps-global (\\', 'RDI (\\\\srv-lon', 'Project_analys', 'Project Filing', 'cad (\\\\srv-lon', 'non-project (\\', 'Specialist Serv', 'Aslan (\\\\srv-lo', 'BuildingSpecs', 'sustainability', 'databases (\\\\s', 'graphics (\\\\sr', 'incoming (\\\\s'];

const Item = ({ icon, t, root, pin, sel }) => (
  <div className={`flex h-6 shrink-0 items-center overflow-hidden whitespace-nowrap ${root ? 'pl-[23px]' : 'pl-[31px]'} ${sel ? 'bg-[#d9d9d9]' : ''}`}>
    <div className="mr-[4px] flex w-[18px] shrink-0 items-center justify-center">{icon}</div>
    <div className={pin ? 'w-[55px] overflow-hidden' : ''}>{t}</div>
    {pin && <div className="ml-[3px] shrink-0"><Pin /></div>}
  </div>
);

const Tree = () => (
  <div className="flex w-[124px] shrink-0 flex-col overflow-hidden text-[#0c0c0c]">
    <Item icon={<Folder />} t="Non-Proje" pin />
    <Item icon={<Folder />} t="GitHub" pin />
    <Item icon={<DownIcon />} t="Download" pin />
    <Item icon={<DocIcon />} t="Document" pin />
    <Item icon={<PicIcon />} t="Pictures" pin />
    <Item icon={<Folder />} t="MidasCivil De" />
    <div className="h-2 shrink-0" />
    <Item root icon={<BldgIcon />} t="BuroHappold" />
    <div className="h-2 shrink-0" />
    <Item root icon={<CloudIcon />} t="OneDrive - Bur" />
    <div className="h-2 shrink-0" />
    <Item root icon={<PCIcon />} t="This PC" />
    <Item icon={<CubeIcon />} t="3D Objects" />
    <Item icon={<DesktopIcon />} t="Desktop" />
    <Item icon={<DocIcon />} t="Documents" />
    <Item icon={<DownIcon />} t="Downloads" />
    <Item icon={<MusicIcon />} t="Music" />
    <Item icon={<PicIcon />} t="Pictures" />
    <Item icon={<VideoIcon />} t="Videos" />
    <Item icon={<OSIcon />} t="OSDisk (C:)" sel />
    {drives.map((d) => <Item key={d} icon={<NetDrive />} t={d} />)}
    <div className="h-2 shrink-0" />
    <Item root icon={<NetIcon />} t="Network" />
  </div>
);

const Check = ({ on }) => (
  <svg width="13" height="13" viewBox="0 0 13 13" className="block"><rect x=".5" y=".5" width="12" height="12" fill="#fff" stroke="#222" />{on && <path d="M2.500 6.500l3 3 5-6" fill="none" stroke="#222" strokeWidth="1.200" />}</svg>
);

const FileRow = ({ name, sel, h, track }) => (
  <div className={`ml-[15px] mr-px flex items-center overflow-hidden whitespace-nowrap ${h} ${sel ? 'bg-[#d9d9d9]' : ''}`}>
    <div className="w-[21px] shrink-0 pl-[4px]">{sel && <Check on />}</div>
    <TxtIcon />
    <div className={`ml-[5px] w-[225px] shrink-0 text-[#0c0c0c] ${track}`}>{name}</div>
    <div className="w-[120px] shrink-0 tracking-[-0.300px] text-[#6d6d6d]">13/12/2019 10:28</div>
    <div className="text-[#6d6d6d]">Tex</div>
  </div>
);

const Files = () => (
  <div className="flex w-[419px] shrink-0 flex-col border-l border-[#f0f0f0]">
    <div className="relative flex h-[26px] shrink-0 items-center overflow-hidden text-[#44586e]">
      <div className="ml-[12px]"><Check /></div>
      <div className="ml-[10px] w-[237px] shrink-0">Name</div>
      <div className="h-full w-px shrink-0 bg-[#e0e0e0]" />
      <div className="w-[119px] shrink-0 pl-[6px]">Date modified</div>
      <div className="h-full w-px shrink-0 bg-[#e0e0e0]" />
      <div className="pl-[6px]">Typ</div>
      <svg width="9" height="5" viewBox="0 0 9 5" className="absolute left-[138px] top-0"><path d="M.5 4.500l4-4 4 4" fill="none" stroke="#666" /></svg>
    </div>
    <div className="h-[6px]" />
    <FileRow name="REBAR-MATL-CODE.txt" h="h-[21px]" track="tracking-[0.130px]" />
    <FileRow name="UNIT.txt" h="h-[21px]" track="tracking-[-0.050px]" />
    <FileRow name="VERSION.txt" sel h="h-[22px]" track="tracking-[-0.100px]" />
    <div className="flex-1" />
    <div className="mx-px flex h-[9px] bg-[#f0f0f0]">
      <svg width="17" height="9" viewBox="0 0 17 9"><path d="M10 3L6 8l2 3" fill="none" stroke="#444" strokeWidth="1.800" /></svg>
      <div className="h-full w-[263px] bg-[#cbcbcb]" />
      <svg width="17" height="9" viewBox="0 0 17 9" className="ml-auto"><path d="M7 3l4 5-2 3" fill="none" stroke="#444" strokeWidth="1.800" /></svg>
    </div>
  </div>
);

const Explorer = () => (
  <div className="relative flex h-[985px] w-[838px] flex-col overflow-hidden bg-white font-['Open_Sans',sans-serif] text-[11.500px] leading-[15px] tracking-[-0.130px]">
    <div className="flex h-[22px] shrink-0 items-stretch border-b border-[#dadbdc] text-[#262626]">
      <div className="flex w-[56px] items-center justify-center bg-[#0063b1] pb-[1px] text-white">File</div>
      <div className="-mb-px flex w-[58px] items-center justify-center border-r border-[#dadbdc] bg-[#f5f6f7] pb-[2px]">Home</div>
      <div className="flex w-[59px] items-center justify-center pb-[1px]">Share</div>
      <div className="flex w-[53px] items-center justify-center pb-[1px]">View</div>
      <div className="ml-auto flex items-center gap-[13px] pb-[3px] pr-[3px]">
        <svg width="9" height="5" viewBox="0 0 9 5"><path d="M.7 4.500l3.800-3.700L8.300 4.500" fill="none" stroke="#999" strokeWidth="1.500" /></svg>
        <div className="flex h-[14px] w-[14px] items-center justify-center rounded-full bg-[#0a63b8] text-[10px] font-bold leading-none text-white">?</div>
      </div>
    </div>
    <Ribbon />
    <AddressBar />
    <div className="flex min-h-0 flex-1">
      <Tree />
      <div className="ml-px flex w-[15px] shrink-0 flex-col items-center bg-[#f0f0f0] pt-[7px]">
        <svg width="9" height="6" viewBox="0 0 9 6" className="block shrink-0"><path d="M1 5l3.500-3.800L8 5" fill="none" stroke="#444" strokeWidth="1.800" /></svg>
        <div className="mt-[93px] h-[708px] w-full shrink-0 bg-[#cbcbcb]" />
        <svg width="9" height="6" viewBox="0 0 9 6" className="mt-[20px] block shrink-0"><path d="M1 1l3.500 3.800L8 1" fill="none" stroke="#444" strokeWidth="1.800" /></svg>
      </div>
      <div className="w-[3px] shrink-0" />
      <Files />
      <div className="flex-1 whitespace-pre border-l border-[#ececec] pl-[6px] pt-[2px] font-['Liberation_Mono',monospace] text-[13.300px] leading-[12.500px] tracking-normal text-black">{'*VERSION\n   8.8.5'}</div>
    </div>
    <div className="pointer-events-none absolute bottom-0 left-0 top-[22px] w-[26px] bg-gradient-to-r from-black/15 to-transparent" />
    <svg width="12" height="19" viewBox="0 0 12 19" className="absolute left-[419px] top-[869px]"><path d="M.5 .8v15l3.500-3.300 2.300 5.500 2.300-1-2.300-5.300h4.900z" fill="#fff" stroke="#111" /></svg>
  </div>
);

export default function App() {
  return (
    <div className="flex h-[985px] w-[1671px] overflow-hidden bg-white">
      <LeftApp />
      <div className="h-[985px] w-[3px] shrink-0 bg-gradient-to-r from-[#2c3a48] to-[#5c6874]" />
      <Explorer />
    </div>
  );
}
